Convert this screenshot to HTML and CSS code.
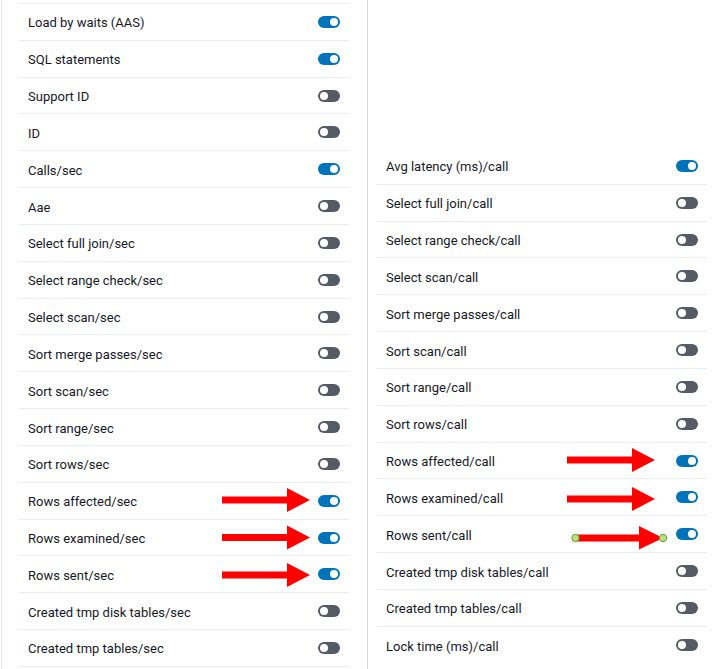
FILE: index.html
```html
<!DOCTYPE html>
<html>
<head>
<meta charset="utf-8">
<link rel="stylesheet" href="styles.css">
</head>
<body>
<div class="page">
  <div class="col col-left">
    <ul class="list list-left">
      <li class="row"><span>Load by waits (AAS)</span><span class="toggle on"></span></li>
      <li class="row"><span>SQL statements</span><span class="toggle on"></span></li>
      <li class="row"><span>Support ID</span><span class="toggle"></span></li>
      <li class="row"><span>ID</span><span class="toggle"></span></li>
      <li class="row"><span>Calls/sec</span><span class="toggle on"></span></li>
      <li class="row"><span>Aae</span><span class="toggle"></span></li>
      <li class="row"><span>Select full join/sec</span><span class="toggle"></span></li>
      <li class="row"><span>Select range check/sec</span><span class="toggle"></span></li>
      <li class="row"><span>Select scan/sec</span><span class="toggle"></span></li>
      <li class="row"><span>Sort merge passes/sec</span><span class="toggle"></span></li>
      <li class="row"><span>Sort scan/sec</span><span class="toggle"></span></li>
      <li class="row"><span>Sort range/sec</span><span class="toggle"></span></li>
      <li class="row"><span>Sort rows/sec</span><span class="toggle"></span></li>
      <li class="row"><span>Rows affected/sec</span><span class="toggle on"></span></li>
      <li class="row"><span>Rows examined/sec</span><span class="toggle on"></span></li>
      <li class="row"><span>Rows sent/sec</span><span class="toggle on"></span></li>
      <li class="row"><span>Created tmp disk tables/sec</span><span class="toggle"></span></li>
      <li class="row"><span>Created tmp tables/sec</span><span class="toggle"></span></li>
    </ul>
  </div>
  <div class="col col-right">
    <ul class="list list-right">
      <li class="row"><span>Avg latency (ms)/call</span><span class="toggle on"></span></li>
      <li class="row"><span>Select full join/call</span><span class="toggle"></span></li>
      <li class="row"><span>Select range check/call</span><span class="toggle"></span></li>
      <li class="row"><span>Select scan/call</span><span class="toggle"></span></li>
      <li class="row"><span>Sort merge passes/call</span><span class="toggle"></span></li>
      <li class="row"><span>Sort scan/call</span><span class="toggle"></span></li>
      <li class="row"><span>Sort range/call</span><span class="toggle"></span></li>
      <li class="row"><span>Sort rows/call</span><span class="toggle"></span></li>
      <li class="row"><span>Rows affected/call</span><span class="toggle on"></span></li>
      <li class="row"><span>Rows examined/call</span><span class="toggle on"></span></li>
      <li class="row"><span>Rows sent/call</span><span class="toggle on"></span></li>
      <li class="row"><span>Created tmp disk tables/call</span><span class="toggle"></span></li>
      <li class="row"><span>Created tmp tables/call</span><span class="toggle"></span></li>
      <li class="row"><span>Lock time (ms)/call</span><span class="toggle"></span></li>
    </ul>
  </div>
  <svg class="annotations" width="712" height="669" viewBox="0 0 712 669">
    <g fill="#ff0000">
      <polygon points="222,496.5 287,496.5 287,488 310,500 287,512 287,503.5 222,503.5"/>
      <polygon points="222,534 287,534 287,525.5 310,537.5 287,549.5 287,541 222,541"/>
      <polygon points="222,571.5 287,571.5 287,563 310,575 287,587 287,578.5 222,578.5"/>
      <polygon points="567,456.5 632,456.5 632,448 655,460 632,472 632,463.5 567,463.5"/>
      <polygon points="567,495.5 632,495.5 632,487 655,499 632,511 632,502.5 567,502.5"/>
      <polygon points="575,534.5 639,534.5 639,526 663,538 639,549.5 639,541.5 575,541.5"/>
    </g>
    <g fill="#b8e07c" stroke="#6f9a3c" stroke-width="1">
      <circle cx="575.5" cy="538" r="3.7"/>
      <circle cx="663" cy="538" r="3.7"/>
    </g>
  </svg>
</div>
</body>
</html>
```

FILE: styles.css
```css
* { box-sizing: border-box; }
html, body {
  margin: 0;
  padding: 0;
  background: #ffffff;
}
body {
  width: 712px;
  height: 669px;
  overflow: hidden;
  font-family: Roboto, "Liberation Sans", Arial, sans-serif;
  font-size: 13px;
  color: #16191f;
}
.page {
  position: relative;
  display: flex;
  width: 712px;
  height: 669px;
  padding-left: 1px;
}
.col {
  height: 100%;
}
.col-left {
  width: 367px;
  border-left: 1px solid #e9ebed;
  border-right: 1px solid #d5dbdb;
  padding: 3px 17px 0 17px;
}
.col-right {
  flex: 1;
  padding: 148px 5px 0 9px;
}
.list {
  list-style: none;
  margin: 0;
  padding: 0;
  width: 330px;
}
.list-left {
  border-top: 1px solid #eaeded;
}
.row {
  display: flex;
  align-items: center;
  justify-content: space-between;
  height: 36.83px;
  padding: 2px 9px 0 9px;
  border-bottom: 1px solid #eaeded;
}
.list-right .row:last-child {
  border-bottom: none;
}
.toggle {
  position: relative;
  width: 22px;
  height: 12px;
  margin-top: -2px;
  border-radius: 6px;
  background: #545b64;
  flex: none;
}
.toggle::after {
  content: "";
  position: absolute;
  top: 2px;
  left: 2px;
  width: 8px;
  height: 8px;
  border-radius: 50%;
  background: #ffffff;
}
.toggle.on {
  background: #0073bb;
}
.toggle.on::after {
  left: auto;
  right: 2px;
}
.annotations {
  position: absolute;
  left: 0;
  top: 0;
  pointer-events: none;
}
```
